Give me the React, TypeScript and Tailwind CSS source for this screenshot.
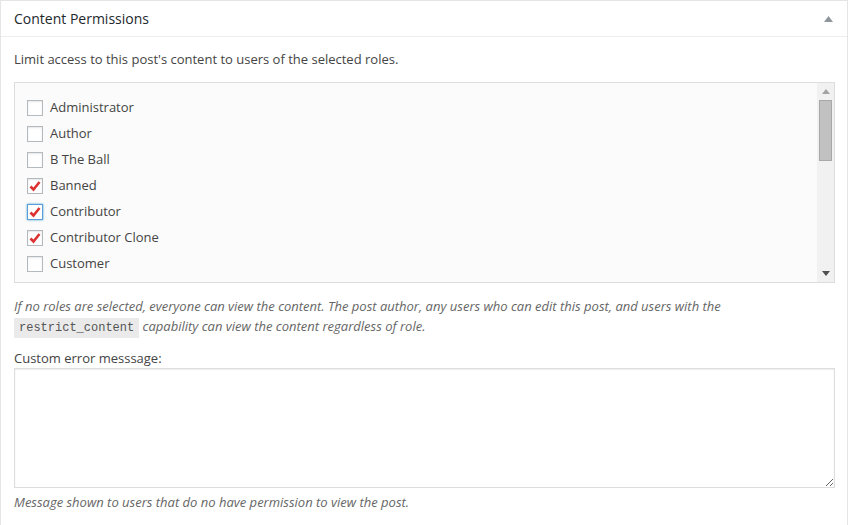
import React from "react";

const roles = [
  { name: "Administrator", checked: false },
  { name: "Author", checked: false },
  { name: "B The Ball", checked: false },
  { name: "Banned", checked: true },
  { name: "Contributor", checked: true, focus: true },
  { name: "Contributor Clone", checked: true },
  { name: "Customer", checked: false },
  { name: "Editor", checked: false },
];

function Checkbox({ checked, focus }: { checked: boolean; focus?: boolean }) {
  return (
    <span
      className={
        "flex h-4 w-4 shrink-0 items-center justify-center border bg-white " +
        (focus
          ? "border-[#5b9dd9] shadow-[0_0_2px_rgba(30,140,190,0.8)]"
          : "border-[#b4b9be] shadow-[inset_0_1px_2px_rgba(0,0,0,0.1)]")
      }
    >
      {checked && (
        <svg width="14" height="14" viewBox="0 0 14 14">
          <polyline
            points="2.5,7.5 5.5,10.5 11.5,3"
            fill="none"
            stroke="#dc3232"
            strokeWidth="2.6"
          />
        </svg>
      )}
    </span>
  );
}

export default function App() {
  return (
    <div className="min-h-screen bg-white font-['Open_Sans',sans-serif] text-[13px] text-[#444]">
      <div className="border border-[#e5e5e5] bg-white">
        {/* header */}
        <div className="flex h-[36px] items-center justify-between border-b border-[#eee] pl-[13px] pr-[14px]">
          <h2 className="text-[14px] text-[#23282d]">Content Permissions</h2>
          <svg width="9" height="6" viewBox="0 0 9 6">
            <polygon points="4.5,0 9,6 0,6" fill="#8f969c" />
          </svg>
        </div>

        {/* body */}
        <div className="pl-[13px] pr-[12px] pt-[12px] pb-[13px]">
          <p className="mb-[13px] leading-5">
            Limit access to this post's content to users of the selected roles.
          </p>

          <div className="flex h-[201px] border border-[#ddd] bg-[#fbfbfb]">
            <ul className="flex-1 overflow-hidden pl-3 pt-[12px]">
              {roles.map((r) => (
                <li key={r.name} className="flex h-[26px] items-center gap-[7px]">
                  <Checkbox checked={r.checked} focus={r.focus} />
                  <span>{r.name}</span>
                </li>
              ))}
            </ul>
            {/* scrollbar */}
            <div className="flex w-[17px] flex-col items-center bg-[#f1f1f1]">
              <div className="flex h-[17px] items-center justify-center">
                <svg width="8" height="5" viewBox="0 0 8 5">
                  <polygon points="4,0 8,5 0,5" fill="#a3a3a3" />
                </svg>
              </div>
              <div className="h-[61px] w-[13px] border border-[#a8a8a8] bg-[#c1c1c1]" />
              <div className="flex-1" />
              <div className="flex h-[17px] items-center justify-center">
                <svg width="8" height="5" viewBox="0 0 8 5">
                  <polygon points="0,0 8,0 4,5" fill="#505050" />
                </svg>
              </div>
            </div>
          </div>

          <p className="mt-[13px] italic leading-5 text-[#666]">
            If no roles are selected, everyone can view the content. The post author, any users who can edit this post, and users with the{" "}
            <br />
            <code className="bg-[#eaeaea] px-[5px] py-[3px] font-['Liberation_Mono',monospace] text-[12px] not-italic text-[#555]">
              restrict_content
            </code>{" "}
            capability can view the content regardless of role.
          </p>

          <label className="mt-[10px] block leading-5">Custom error messsage:</label>
          <textarea className="block h-[120px] w-full border border-[#ddd] bg-white shadow-[inset_0_1px_2px_rgba(0,0,0,0.07)] outline-none" />
          <p className="mt-1 italic leading-5 text-[#666]">
            Message shown to users that do no have permission to view the post.
          </p>
        </div>
      </div>
    </div>
  );
}
